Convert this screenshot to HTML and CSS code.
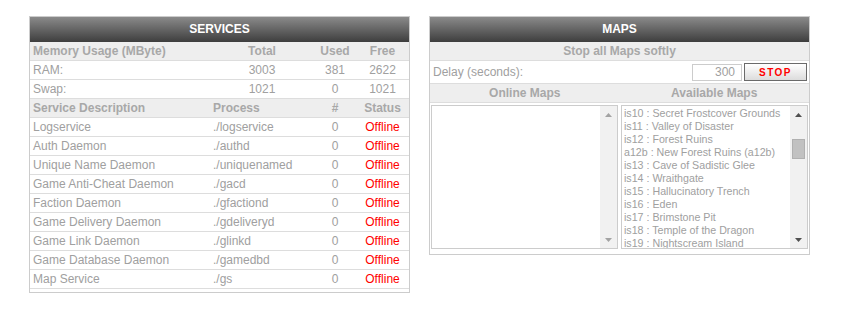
FILE: index.html
```html
<!DOCTYPE html>
<html lang="en">
<head>
    <meta charset="UTF-8">
    <title>Server Control</title>
    <link rel="stylesheet" href="styles.css">
</head>
<body>

    <div id="page">

        <div class="panel">
            <div class="panel-title">SERVICES</div>
            <table class="grid">
                <colgroup>
                    <col class="col-name">
                    <col class="col-proc">
                    <col class="col-num">
                    <col class="col-state">
                </colgroup>
                <tr class="head">
                    <td>Memory Usage (MByte)</td>
                    <td class="mid">Total</td>
                    <td class="mid">Used</td>
                    <td class="mid">Free</td>
                </tr>
                <tr>
                    <td>RAM:</td>
                    <td class="mid">3003</td>
                    <td class="mid">381</td>
                    <td class="mid">2622</td>
                </tr>
                <tr>
                    <td>Swap:</td>
                    <td class="mid">1021</td>
                    <td class="mid">0</td>
                    <td class="mid">1021</td>
                </tr>
                <tr class="head">
                    <td>Service Description</td>
                    <td>Process</td>
                    <td class="mid">#</td>
                    <td class="mid">Status</td>
                </tr>
                <tr><td>Logservice</td><td>./logservice</td><td class="mid">0</td><td class="mid offline">Offline</td></tr>
                <tr><td>Auth Daemon</td><td>./authd</td><td class="mid">0</td><td class="mid offline">Offline</td></tr>
                <tr><td>Unique Name Daemon</td><td>./uniquenamed</td><td class="mid">0</td><td class="mid offline">Offline</td></tr>
                <tr><td>Game Anti-Cheat Daemon</td><td>./gacd</td><td class="mid">0</td><td class="mid offline">Offline</td></tr>
                <tr><td>Faction Daemon</td><td>./gfactiond</td><td class="mid">0</td><td class="mid offline">Offline</td></tr>
                <tr><td>Game Delivery Daemon</td><td>./gdeliveryd</td><td class="mid">0</td><td class="mid offline">Offline</td></tr>
                <tr><td>Game Link Daemon</td><td>./glinkd</td><td class="mid">0</td><td class="mid offline">Offline</td></tr>
                <tr><td>Game Database Daemon</td><td>./gamedbd</td><td class="mid">0</td><td class="mid offline">Offline</td></tr>
                <tr><td>Map Service</td><td>./gs</td><td class="mid">0</td><td class="mid offline">Offline</td></tr>
            </table>
        </div>

        <div class="panel">
            <div class="panel-title">MAPS</div>
            <div class="bar head">Stop all Maps softly</div>
            <div class="bar delay">
                <span class="delay-label">Delay (seconds):</span>
                <input type="text" class="delay-input" value="300">
                <button class="stop">STOP</button>
            </div>
            <div class="bar head split">
                <span>Online Maps</span>
                <span>Available Maps</span>
            </div>
            <div class="lists">

                <div class="listbox">
                    <div class="items"></div>
                    <div class="scroll disabled">
                        <div class="arrow"><svg width="7" height="4" viewBox="0 0 7 4"><polygon points="3.5,0 7,4 0,4"/></svg></div>
                        <div class="track"></div>
                        <div class="arrow"><svg width="7" height="4" viewBox="0 0 7 4"><polygon points="0,0 7,0 3.5,4"/></svg></div>
                    </div>
                </div>

                <div class="listbox">
                    <div class="items">
                        <div>is10 : Secret Frostcover Grounds</div>
                        <div>is11 : Valley of Disaster</div>
                        <div>is12 : Forest Ruins</div>
                        <div>a12b : New Forest Ruins (a12b)</div>
                        <div>is13 : Cave of Sadistic Glee</div>
                        <div>is14 : Wraithgate</div>
                        <div>is15 : Hallucinatory Trench</div>
                        <div>is16 : Eden</div>
                        <div>is17 : Brimstone Pit</div>
                        <div>is18 : Temple of the Dragon</div>
                        <div>is19 : Nightscream Island</div>
                    </div>
                    <div class="scroll">
                        <div class="arrow"><svg width="7" height="4" viewBox="0 0 7 4"><polygon points="3.5,0 7,4 0,4"/></svg></div>
                        <div class="track"><div class="thumb"></div></div>
                        <div class="arrow"><svg width="7" height="4" viewBox="0 0 7 4"><polygon points="0,0 7,0 3.5,4"/></svg></div>
                    </div>
                </div>

            </div>
        </div>

    </div>

</body>
</html>
```

FILE: styles.css
```css
body {
    font-family: 'Liberation Sans', Arial, sans-serif;
    font-size: 12px;
    margin: 0;
    padding: 0;
    color: #a0a0a0;
    background-color: #fff;
}

#page {
    display: flex;
    align-items: flex-start;
    gap: 19px;
    padding: 16px 0 0 29px;
}

.panel {
    width: 379px;
    border: 1px solid #cccccc;
}

.panel-title {
    height: 25px;
    line-height: 25px;
    text-align: center;
    font-weight: bold;
    color: #fff;
    background: linear-gradient(#8a8a8a, #3e3e3e);
}

.grid {
    width: 100%;
    border-collapse: collapse;
    margin-bottom: 3px;
}

.col-name { width: 180px; }
.col-proc { width: 104px; }
.col-num { width: 42px; }
.col-state { width: 53px; }

.grid td {
    height: 18px;
    padding: 0 3px;
    border-bottom: 1px solid #dddddd;
    white-space: nowrap;
}

.head {
    background-color: #eeeeee;
    font-weight: bold;
    color: #a8a8a8;
}

.mid {
    text-align: center;
}

.offline {
    color: #ff0000;
}

.bar {
    height: 18px;
    line-height: 18px;
    border-bottom: 1px solid #dddddd;
    text-align: center;
}

.split {
    display: flex;
}

.split span {
    flex: 1;
}

.delay {
    height: 22px;
    display: flex;
    align-items: center;
    gap: 2px;
    padding: 0 2px 0 3px;
}

.delay-label {
    flex: 1;
    text-align: left;
}

.delay-input {
    box-sizing: border-box;
    width: 50px;
    height: 17px;
    margin: 0;
    padding: 0 6px;
    border: 1px solid #cccccc;
    font-family: inherit;
    font-size: 12px;
    color: #a0a0a0;
    text-align: right;
}

.stop {
    box-sizing: border-box;
    width: 63px;
    height: 18px;
    margin: 0;
    padding: 0;
    border: 1px solid #6a6a6a;
    background: linear-gradient(#ffffff, #dcdcdc);
    font-family: inherit;
    font-size: 10px;
    font-weight: bold;
    letter-spacing: 1.5px;
    color: #ff0000;
    cursor: pointer;
}

.lists {
    display: flex;
    gap: 3px;
    padding: 2px 1px 5px 1px;
}

.listbox {
    box-sizing: border-box;
    width: 187px;
    height: 144px;
    display: flex;
    border: 1px solid #cccccc;
    background-color: #fff;
}

.items {
    flex: 1;
    overflow: hidden;
    padding-top: 1px;
    font-size: 8pt;
    line-height: 13px;
    color: #a0a0a0;
    white-space: nowrap;
}

.items div {
    padding: 0 2px;
}

.scroll {
    width: 17px;
    display: flex;
    flex-direction: column;
    background-color: #f1f1f1;
}

.arrow {
    height: 17px;
    display: flex;
    align-items: center;
    justify-content: center;
}

.arrow svg {
    fill: #505050;
}

.disabled .arrow svg {
    fill: #a3a3a3;
}

.track {
    flex: 1;
    padding: 16px 2px 0 2px;
}

.thumb {
    height: 20px;
    background-color: #c1c1c1;
    border: 1px solid #b0b0b0;
    box-sizing: border-box;
}
```
